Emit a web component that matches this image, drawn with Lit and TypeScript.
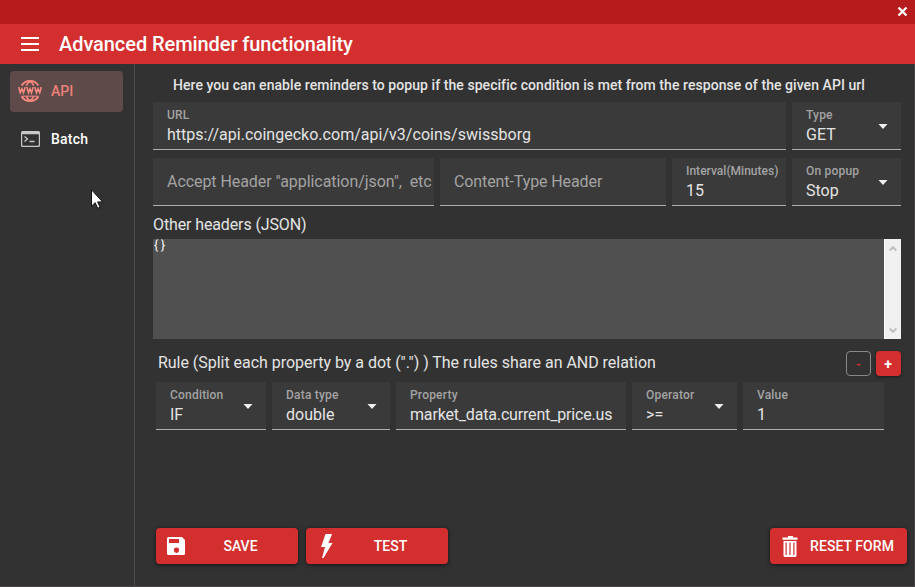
import { LitElement, html, css, svg, nothing } from "lit";
import { customElement, property } from "lit/decorators.js";

@customElement("form-field")
class FormField extends LitElement {
  @property() label = "";
  @property() value = "";
  @property() hint = "";
  @property({ type: Boolean }) select = false;

  static styles = css`
    :host { display: block; min-width: 0; }
    .field {
      box-sizing: border-box;
      height: 48px;
      background: #3a3a3a;
      border-bottom: 1px solid #b0b0b0;
      display: flex;
      align-items: center;
      padding-left: 14px;
      overflow: hidden;
    }
    .texts { flex: 1; min-width: 0; white-space: pre; }
    .label {
      font-size: 12px;
      font-weight: 500;
      line-height: 14px;
      letter-spacing: var(--label-track, 0.2px);
      color: #a3a3a3;
      margin-top: 1px;
    }
    .value { font-size: 16px; line-height: 20px; margin-top: 3px; color: #e4e4e4; letter-spacing: var(--track, 0.02px); }
    .hint { font-size: 16px; line-height: 20px; color: #a3a3a3; letter-spacing: var(--track, 0px); }
    .arrow { width: 10px; height: 5px; margin: 2px 13px 0 0; fill: #efefef; flex: none; }
  `;

  render() {
    return html`<div class="field">
      <div class="texts">${this.hint
        ? html`<div class="hint">${this.hint}</div>`
        : html`<div class="label">${this.label}</div><div class="value">${this.value}</div>`}</div>
      ${this.select
        ? html`<svg class="arrow" viewBox="0 0 10 5"><path d="M0.5 0h9L5 5z" /></svg>`
        : nothing}
    </div>`;
  }
}

const menuIcon = svg`<path d="M0 0h18v2H0zM0 6h18v2H0zM0 12h18v2H0z"/>`;

@customElement("app-root")
class AppRoot extends LitElement {
  static styles = css`
    :host {
      display: flex;
      flex-direction: column;
      box-sizing: border-box;
      width: 100%;
      height: 100vh;
      overflow: hidden;
      position: relative;
      background: #323232;
      color: #e4e4e4;
      font-family: Roboto, "Liberation Sans", sans-serif;
    }
    svg { display: block; flex: none; }
    .titlebar {
      height: 24px;
      flex: none;
      background: #b71c1c;
      display: flex;
      align-items: center;
      justify-content: flex-end;
      padding: 0 7px 1px 0;
      box-sizing: border-box;
    }
    .header {
      height: 40px;
      flex: none;
      background: #d32f2f;
      display: flex;
      align-items: center;
      padding-left: 21px;
      gap: 20px;
      color: #fff;
      fill: #fff;
    }
    .title { font-size: 20px; font-weight: 500; line-height: 24px; white-space: nowrap; letter-spacing: -0.07px; }
    .body {
      flex: 1;
      display: flex;
      min-height: 0;
      border-right: 1px solid #474545;
      border-bottom: 1px solid #474545;
    }
    .sidebar {
      flex: none;
      padding: 7px 11px 0 10px;
      border-right: 1px solid #4d4d4d;
      width: 113px;
      display: flex;
      flex-direction: column;
      gap: 7px;
    }
    .item {
      height: 41px;
      box-sizing: border-box;
      display: flex;
      align-items: center;
      gap: 9px;
      padding: 0 0 2px 8px;
      border-radius: 4px;
      font-size: 14px;
      font-weight: 500;
      color: #fff;
      letter-spacing: 0.2px;
    }
    .item.active { background: #5f4a4a; color: #ee8078; letter-spacing: 0; }
    .main {
      flex: 1;
      min-width: 0;
      display: flex;
      flex-direction: column;
      padding: 0 13px 0 18px;
    }
    .intro {
      height: 38px;
      line-height: 42px;
      padding-left: 20px;
      font-size: 14px;
      font-weight: 500;
      white-space: nowrap;
      letter-spacing: 0.06px;
    }
    .row { display: grid; gap: 6px; height: 48px; }
    .row.url { grid-template-columns: 633px 109px; }
    .row.heads { grid-template-columns: 281px 226px 114px 109px; margin-top: 8px; }
    .row.rule { grid-template-columns: 110px 118px 230px 105px 141px; margin: 6px 0 0 3px; }
    .accept { --track: -0.06px; }
    .ctype { --track: -0.1px; }
    .interval { --label-track: 0.02px; }
    .prop { --track: -0.17px; }
    .caption { font-size: 16px; white-space: nowrap; letter-spacing: -0.03px; }
    .caption.other { height: 33px; line-height: 37px; letter-spacing: -0.12px; }
    .area { height: 100px; background: #505050; display: flex; }
    .code { flex: 1; font-size: 12px; line-height: 12px; letter-spacing: 3px; padding-left: 1px; color: #fff; }
    .scroll {
      width: 16px;
      background: #f0f0f0;
      border-left: 1px solid #fff;
      display: flex;
      flex-direction: column;
      justify-content: space-between;
      align-items: center;
      padding: 6px 0 5px;
      height: 89px;
    }
    .chev { fill: none; stroke: #bfbfbf; stroke-width: 2; }
    .rulehead { display: flex; align-items: center; height: 25px; margin-top: 12px; padding-left: 5px; }
    .rulehead .caption { flex: 1; line-height: 23px; height: 25px; }
    .mini {
      width: 25px;
      height: 25px;
      box-sizing: border-box;
      border-radius: 4px;
      display: grid;
      place-items: center;
      font-size: 14px;
      font-weight: 500;
    }
    .minus { border: 1px solid #898989; color: #d32f2f; margin-right: 5px; }
    .plus { background: #d32f2f; color: #fff; font-weight: 700; padding-right: 1px; box-shadow: 0 1px 3px rgba(0, 0, 0, 0.5); }
    .actions { margin: auto -6px 22px 3px; display: flex; gap: 8px; }
    .btn {
      height: 36px;
      width: 142px;
      box-sizing: border-box;
      border-radius: 4px;
      background: #d32f2f;
      fill: #fff;
      color: #fff;
      box-shadow: 0 1px 4px rgba(0, 0, 0, 0.6);
      display: flex;
      align-items: center;
      padding-left: 8px;
      font-size: 14px;
      font-weight: 500;
    }
    .btn span { flex: 1; text-align: center; padding-right: 5px; white-space: nowrap; }
    .btn.reset { width: 137px; margin-left: auto; }
    .btn.reset span { padding: 0 5px 0 0; letter-spacing: 0.05px; }
    .cursor { position: absolute; left: 91px; top: 189px; }
  `;

  render() {
    return html`
      <div class="titlebar">
        <svg width="11" height="11" viewBox="0 0 11 11"><path d="M1.500 1.500l8 8M9.500 1.500l-8 8" stroke="#fff" stroke-width="2.300" /></svg>
      </div>
      <div class="header">
        <svg width="18" height="14" viewBox="0 0 18 14">${menuIcon}</svg>
        <div class="title">Advanced Reminder functionality</div>
      </div>
      <div class="body">
        <nav class="sidebar">
          <div class="item active">
            <svg width="24" height="24" viewBox="0 0 24 24">
              <g fill="none" stroke="#ff8a80">
                <path d="M3.600 6.600Q6.500 1.900 12 1.900T20.400 6.600M3.600 17.400Q6.500 22.100 12 22.100T20.400 17.400" stroke-width="1.900" />
                <path d="M8.300 6.600Q9.500 3.500 12 2.200Q14.500 3.500 15.700 6.600M8.300 17.400Q9.500 20.500 12 21.800Q14.500 20.500 15.700 17.400" stroke-width="1.600" />
                <path d="M3.500 17.200h17" stroke-width="1" />
                <path d="M0.900 9L2.300 13.800L3.900 9.800L5.500 13.800L6.900 9M9.100 9L10.500 13.800L12 9.800L13.500 13.800L14.900 9M17.100 9L18.500 13.800L20.100 9.800L21.700 13.800L23.100 9" stroke-width="1.500" />
                <path d="M0 8.600h2M6 8.600h4M14 8.600h4M22 8.600h2" stroke-width=".8" />
              </g>
            </svg>
            <span>API</span>
          </div>
          <div class="item">
            <svg width="24" height="24" viewBox="0 0 24 24">
              <path fill="#c8c8c8" fill-rule="evenodd" d="M4.500 4h16A1.500 1.500 0 0 1 22 5.500v13a1.500 1.500 0 0 1-1.500 1.500h-16A1.500 1.500 0 0 1 3 18.500v-13A1.500 1.500 0 0 1 4.500 4zM4.200 7.200v10.800q0 .8.800.8h15q.8 0 .8-.8v-10.800z" />
              <path d="M6.500 9.500l3 2.500-3 2.500M11.500 14.500h5" fill="none" stroke="#c8c8c8" stroke-width="1.300" />
            </svg>
            <span>Batch</span>
          </div>
        </nav>
        <main class="main">
          <div class="intro">Here you can enable reminders to popup if the specific condition is met from the response of the given API url</div>
          <div class="row url">
            <form-field label="URL" value="https://api.coingecko.com/api/v3/coins/swissborg"></form-field>
            <form-field label="Type" value="GET" select></form-field>
          </div>
          <div class="row heads">
            <form-field class="accept" hint='Accept Header "application/json",  etc'></form-field>
            <form-field class="ctype" hint="Content-Type Header"></form-field>
            <form-field class="interval" label="Interval(Minutes)" value="15"></form-field>
            <form-field label="On popup" value="Stop" select></form-field>
          </div>
          <div class="caption other">Other headers (JSON)</div>
          <div class="area">
            <div class="code">{}</div>
            <div class="scroll">
              <svg class="chev" width="8" height="7" viewBox="0 0 8 7"><path d="M.7 5.500L4 2.200 7.300 5.500" /></svg>
              <svg class="chev" width="8" height="7" viewBox="0 0 8 7"><path d="M.7 1.500L4 4.800 7.300 1.500" /></svg>
            </div>
          </div>
          <div class="rulehead">
            <div class="caption">Rule (Split each property by a dot (".") ) The rules share an AND relation</div>
            <div class="mini minus">-</div>
            <div class="mini plus">+</div>
          </div>
          <div class="row rule">
            <form-field label="Condition" value="IF" select></form-field>
            <form-field label="Data type" value="double" select></form-field>
            <form-field class="prop" label="Property" value="market_data.current_price.us"></form-field>
            <form-field label="Operator" value=">=" select></form-field>
            <form-field label="Value" value="1"></form-field>
          </div>
          <div class="actions">
            <div class="btn">
              <svg width="24" height="24" viewBox="0 0 24 24"><path fill-rule="evenodd" d="M4.500 3h13.500L21 6v13.500q0 1.500-1.500 1.500h-15q-1.500 0-1.500-1.500v-15Q3 3 4.500 3zM5 5v4h10V5zM12.500 13.500a2.700 2.700 0 1 0 .01 0z" /></svg>
              <span>SAVE</span>
            </div>
            <div class="btn">
              <svg width="24" height="24" viewBox="0 0 24 24"><path d="M11.500 0H18l-3.500 9h4L9.500 24H8l3-11H7z" /></svg>
              <span>TEST</span>
            </div>
            <div class="btn reset">
              <svg width="24" height="24" viewBox="0 0 24 24"><path fill-rule="evenodd" d="M10 2h5v1.500h4.500v2.300h-15V3.500H10zM5.500 7h13v14.500q0 1.500-1.500 1.500H7q-1.500 0-1.500-1.500zM7.500 8.500v12.500h1.200V8.500zM11.400 8.500v12.500h1.200V8.500zM15.300 8.500v12.500h1.200V8.500z" /></svg>
              <span>RESET FORM</span>
            </div>
          </div>
        </main>
      </div>
      <svg class="cursor" width="12" height="20" viewBox="0 0 12 20">
        <path d="M.5.8v16.400l3.700-3.500 2.500 5.600 2.400-1-2.500-5.400h5z" fill="#fff" stroke="#111" stroke-width="1" />
      </svg>
    `;
  }
}
